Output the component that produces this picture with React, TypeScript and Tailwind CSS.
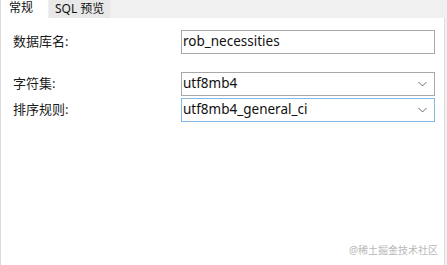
import React from "react";

const Chevron: React.FC = () => (
  <svg width="9" height="6" viewBox="0 0 9 6" className="text-[#6b6b6b]">
    <path d="M0.5 1 L4.5 5 L8.5 1" fill="none" stroke="currentColor" strokeWidth="1" />
  </svg>
);

const Field: React.FC<{
  label: string;
  value: string;
  select?: boolean;
  focused?: boolean;
}> = ({ label, value, select, focused }) => (
  <div className="flex items-center">
    <div className="w-[168px] text-[13px] text-[#1a1a1a]">{label}</div>
    <div
      className={
        focused
          ? "flex items-center justify-between w-[254px] h-[24px] border border-[#86b9e8] bg-white pl-[1px] pr-[7px]"
          : "flex items-center justify-between w-[254px] h-[24px] border border-[#a8a8a8] bg-white pl-[1px] pr-[7px]"
      }
    >
      <span className="text-[13.5px] text-[#111] leading-none">{value}</span>
      {select && <Chevron />}
    </div>
  </div>
);

const App: React.FC = () => {
  return (
    <div
      className="relative w-[447px] h-[265px] bg-[#f0f0f0] flex flex-col overflow-hidden"
      style={{ fontFamily: '"Noto Sans", "Noto Sans CJK SC", sans-serif' }}
    >
      <div className="flex h-[18px] shrink-0">
        <div className="w-[48px] bg-white border-l border-[#dcdcdc] pl-[8px] text-[12px] leading-[16px] text-[#111]">
          常规
        </div>
        <div className="ml-[1px] w-[61px] bg-[#e8e8e8] pl-[6px] text-[12px] leading-[17px] text-[#111]">
          SQL 预览
        </div>
      </div>
      <div className="flex-1 w-[445px] bg-white border-l border-r border-[#dcdcdc] pl-[12px] pt-[12px]">
        <Field label="数据库名:" value="rob_necessities" />
        <div className="h-[18px]" />
        <Field label="字符集:" value="utf8mb4" select />
        <div className="h-[2px]" />
        <Field label="排序规则:" value="utf8mb4_general_ci" select focused />
      </div>
      <div className="absolute right-[9px] bottom-[7px] text-[10px] text-[#b8b8b8]">
        @稀土掘金技术社区
      </div>
    </div>
  );
};

export default App;
